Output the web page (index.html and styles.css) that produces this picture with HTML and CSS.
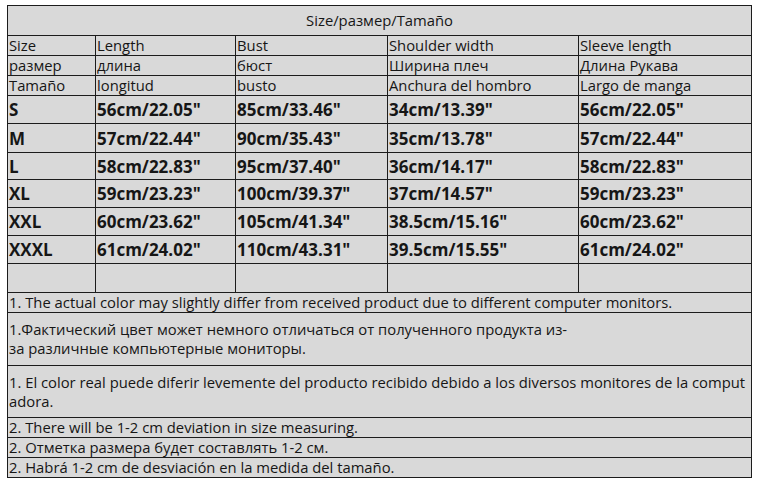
FILE: index.html
```html
<!DOCTYPE html>
<html>
<head>
<meta charset="utf-8">
<link rel="stylesheet" href="styles.css">
</head>
<body>
<table class="chart">
  <colgroup>
    <col class="c1"><col class="c2"><col class="c3"><col class="c4"><col class="c5">
  </colgroup>
  <tr class="title"><td colspan="5">Size/размер/Tamaño</td></tr>
  <tr class="label"><td>Size</td><td>Length</td><td>Bust</td><td>Shoulder width</td><td>Sleeve length</td></tr>
  <tr class="label"><td>размер</td><td>длина</td><td>бюст</td><td>Ширина плеч</td><td>Длина Рукава</td></tr>
  <tr class="label"><td>Tamaño</td><td>longitud</td><td>busto</td><td>Anchura del hombro</td><td>Largo de manga</td></tr>
  <tr class="data"><td>S</td><td>56cm/22.05"</td><td>85cm/33.46"</td><td>34cm/13.39"</td><td>56cm/22.05"</td></tr>
  <tr class="data r29"><td>M</td><td>57cm/22.44"</td><td>90cm/35.43"</td><td>35cm/13.78"</td><td>57cm/22.44"</td></tr>
  <tr class="data r27"><td>L</td><td>58cm/22.83"</td><td>95cm/37.40"</td><td>36cm/14.17"</td><td>58cm/22.83"</td></tr>
  <tr class="data"><td>XL</td><td>59cm/23.23"</td><td>100cm/39.37"</td><td>37cm/14.57"</td><td>59cm/23.23"</td></tr>
  <tr class="data"><td>XXL</td><td>60cm/23.62"</td><td>105cm/41.34"</td><td>38.5cm/15.16"</td><td>60cm/23.62"</td></tr>
  <tr class="data"><td>XXXL</td><td>61cm/24.02"</td><td>110cm/43.31"</td><td>39.5cm/15.55"</td><td>61cm/24.02"</td></tr>
  <tr class="data r29"><td></td><td></td><td></td><td></td><td></td></tr>
  <tr class="note"><td colspan="5">1. The actual color may slightly differ from received product due to different computer monitors.</td></tr>
  <tr class="note tall53"><td colspan="5">1.Фактический цвет может немного отличаться от полученного продукта из-<br>за различные компьютерные мониторы.</td></tr>
  <tr class="note tall52"><td colspan="5">1. El color real puede diferir levemente del producto recibido debido a los diversos monitores de la comput<br>adora.</td></tr>
  <tr class="note"><td colspan="5">2. There will be 1-2 cm deviation in size measuring.</td></tr>
  <tr class="note"><td colspan="5">2. Отметка размера будет составлять 1-2 см.</td></tr>
  <tr class="note"><td colspan="5">2. Habrá 1-2 cm de desviación en la medida del tamaño.</td></tr>
</table>
</body>
</html>
```
FILE: styles.css
```css
html, body {
  margin: 0;
  padding: 0;
  background: #ffffff;
}
body {
  padding: 5px 0 0 7px;
  font-family: "Open Sans", "Noto Sans", sans-serif;
  font-size: 14.8px;
  color: #161616;
}
.chart {
  border-collapse: collapse;
  table-layout: fixed;
  width: 744px;
  background: #d9d9d9;
  border: 1px solid #1c1c1c;
}
.c1 { width: 88px; }
.c2 { width: 140px; }
.c3 { width: 152px; }
.c4 { width: 191px; }
.c5 { width: 173px; }
.chart td {
  border: 1px solid #1c1c1c;
  padding: 0 1px;
  vertical-align: middle;
  white-space: nowrap;
  line-height: 19px;
  overflow: hidden;
}
.title td {
  height: 29px;
  text-align: center;
  padding: 0;
}
.label td {
  height: 19px;
}
.data td {
  height: 27px;
  font-weight: 700;
  font-size: 17px;
}
.data.r29 td { height: 28px; }
.data.r27 td { height: 26px; }
.note td {
  height: 19px;
}
.note.tall53 td { height: 52px; }
.note.tall52 td { height: 51px; }
```
